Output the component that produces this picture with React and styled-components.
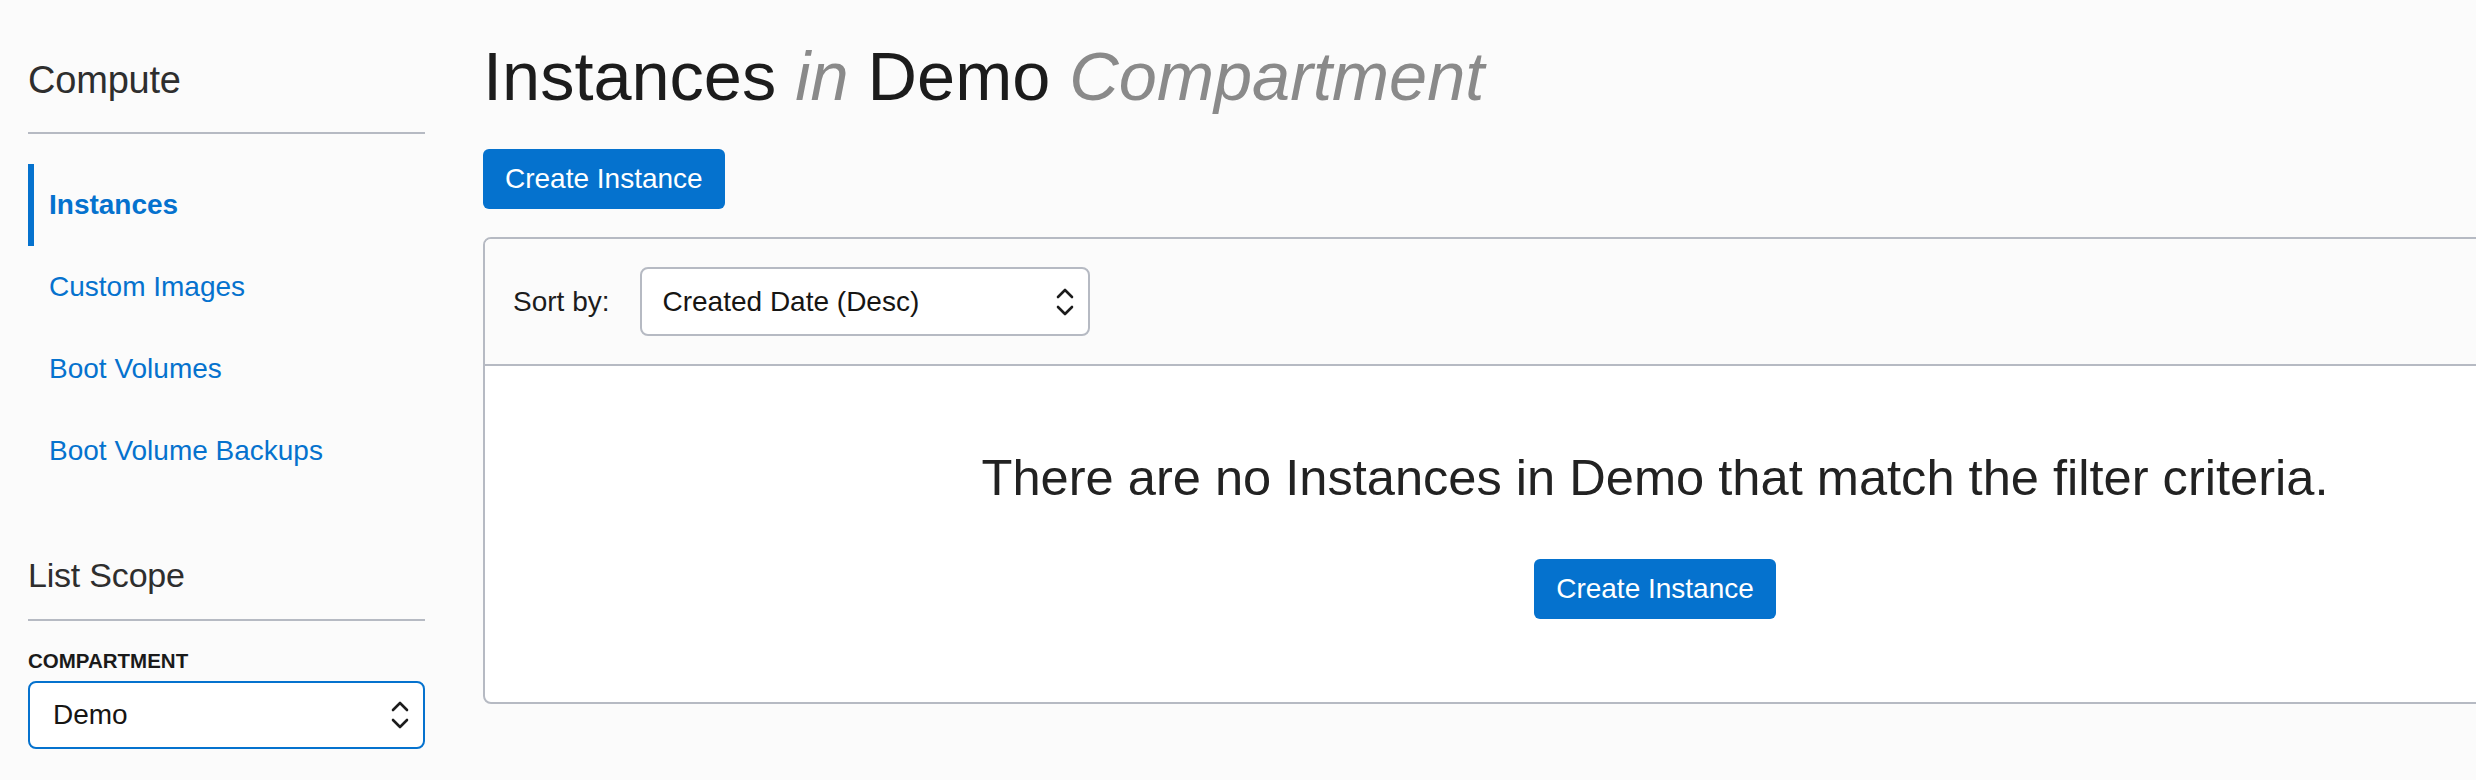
import React from "react";
import styled, { createGlobalStyle } from "styled-components";

const GlobalStyle = createGlobalStyle`
  html, body {
    margin: 0;
    padding: 0;
    background: #fbfbfb;
    overflow: hidden;
  }
  body {
    font-family: "Liberation Sans", Arial, Helvetica, sans-serif;
    color: #1f1f1f;
  }
  * { box-sizing: border-box; }
`;

const BLUE = "#0572ce";
const LINE = "#b6bac3";

const Layout = styled.div`
  display: flex;
  align-items: flex-start;
  gap: 58px;
  padding-left: 28px;
  min-height: 780px;
`;

const Sidebar = styled.aside`
  flex: 0 0 397px;
  width: 397px;
  padding-top: 57px;
  display: flex;
  flex-direction: column;
`;

const SectionTitle = styled.h2`
  margin: ${(p) => p.$mt || 0}px 0 0;
  font-weight: 400;
  font-size: ${(p) => p.$size}px;
  line-height: ${(p) => p.$lh}px;
  padding-bottom: ${(p) => p.$pb}px;
  border-bottom: 2px solid ${LINE};
  color: #2e2e2e;
  letter-spacing: -0.2px;
`;

const NavList = styled.nav`
  margin-top: 30px;
  display: flex;
  flex-direction: column;
`;

const NavItem = styled.a`
  height: 82px;
  display: flex;
  align-items: center;
  border-left: 6px solid ${(p) => (p.$active ? BLUE : "transparent")};
  padding-left: 15px;
  font-size: 28px;
  font-weight: ${(p) => (p.$active ? 700 : 400)};
  color: ${BLUE};
  text-decoration: none;
  cursor: pointer;
`;

const FieldLabel = styled.div`
  margin-top: 28px;
  font-size: 20.5px;
  line-height: 24px;
  font-weight: 700;
  color: #1a1a1a;
`;

const SelectBox = styled.div`
  margin-top: ${(p) => p.$mt || 0}px;
  width: ${(p) => p.$w};
  height: ${(p) => p.$h}px;
  border: 2px solid ${(p) => (p.$focus ? BLUE : LINE)};
  border-radius: 8px;
  background: #fff;
  display: flex;
  align-items: center;
  justify-content: space-between;
  padding: 0 14px 0 ${(p) => p.$pl}px;
  font-size: 28px;
  color: #161513;
  flex: 0 0 auto;
`;

const Main = styled.main`
  flex: 0 0 auto;
  padding-top: 37px;
  display: flex;
  flex-direction: column;
  align-items: flex-start;
`;

const Title = styled.h1`
  margin: 0;
  font-size: 68.5px;
  line-height: 80px;
  font-weight: 400;
  color: #1c1c1c;
  white-space: nowrap;
`;

const Muted = styled.em`
  font-style: italic;
  color: #8a8a8a;
`;

const Button = styled.button`
  margin-top: ${(p) => p.$mt || 0}px;
  height: 60px;
  padding: 0 22px;
  background: ${BLUE};
  color: #fff;
  border: none;
  border-radius: 6px;
  font-family: inherit;
  font-size: 28px;
  cursor: pointer;
`;

const Panel = styled.section`
  margin-top: 28px;
  width: 2344px;
  border: 2px solid ${LINE};
  border-radius: 8px;
  overflow: hidden;
  background: #fff;
`;

const PanelHeader = styled.div`
  display: flex;
  align-items: center;
  gap: 31px;
  padding: 28px;
  background: #fbfbfb;
  border-bottom: 2px solid ${LINE};
`;

const SortLabel = styled.span`
  font-size: 28px;
  color: #1c1c1c;
`;

const PanelBody = styled.div`
  display: flex;
  flex-direction: column;
  align-items: center;
  gap: 51px;
  padding: 82px 0 83px;
`;

const Message = styled.p`
  margin: 0;
  font-size: 50.6px;
  line-height: 60px;
  color: #222;
`;

const Chevrons = () => (
  <svg width="18" height="28" viewBox="-1 -1 18 28" fill="none" stroke="#1c1c1c" strokeWidth="2.6" strokeLinecap="round" strokeLinejoin="round">
    <polyline points="1,8 8,1 15,8" />
    <polyline points="1,18 8,25 15,18" />
  </svg>
);

export default function App() {
  return (
    <>
      <GlobalStyle />
      <Layout>
        <Sidebar>
          <SectionTitle $size={38} $lh={46} $pb={29}>Compute</SectionTitle>
          <NavList>
            <NavItem $active>Instances</NavItem>
            <NavItem>Custom Images</NavItem>
            <NavItem>Boot Volumes</NavItem>
            <NavItem>Boot Volume Backups</NavItem>
          </NavList>
          <SectionTitle $size={34} $lh={42} $pb={23} $mt={62}>List Scope</SectionTitle>
          <FieldLabel>COMPARTMENT</FieldLabel>
          <SelectBox $mt={8} $w="100%" $h={68} $pl={23} $focus>
            <span>Demo</span>
            <Chevrons />
          </SelectBox>
        </Sidebar>
        <Main>
          <Title>
            Instances <Muted>in</Muted> Demo <Muted>Compartment</Muted>
          </Title>
          <Button $mt={32}>Create Instance</Button>
          <Panel>
            <PanelHeader>
              <SortLabel>Sort by:</SortLabel>
              <SelectBox $w="450px" $h={69} $pl={20}>
                <span>Created Date (Desc)</span>
                <Chevrons />
              </SelectBox>
            </PanelHeader>
            <PanelBody>
              <Message>There are no Instances in Demo that match the filter criteria.</Message>
              <Button>Create Instance</Button>
            </PanelBody>
          </Panel>
        </Main>
      </Layout>
    </>
  );
}
